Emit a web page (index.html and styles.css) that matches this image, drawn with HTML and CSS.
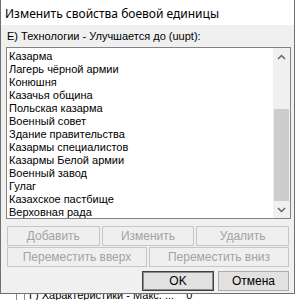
FILE: index.html
```html
<!DOCTYPE html>
<html>
<head>
	<meta charset="utf-8">
	<title>Изменить свойства боевой единицы</title>
	<link rel="stylesheet" href="styles.css">
</head>
<body>
	<!-- диалог поверх главного окна -->
	<div class="dialog">
		<div class="titlebar">Изменить свойства боевой единицы</div>
		<div class="content">
			<div class="caption">E) Технологии - Улучшается до (uupt):</div>
			<div class="listbox">
				<ul class="items">
					<li>Казарма</li>
					<li>Лагерь чёрной армии</li>
					<li>Конюшня</li>
					<li>Казачья община</li>
					<li>Польская казарма</li>
					<li>Военный совет</li>
					<li>Здание правительства</li>
					<li>Казармы специалистов</li>
					<li>Казармы Белой армии</li>
					<li>Военный завод</li>
					<li>Гулаг</li>
					<li>Казахское пастбище</li>
					<li>Верховная рада</li>
				</ul>
				<div class="scrollbar">
					<div class="arrow">
						<svg width="9" height="6" viewBox="0 0 9 6"><polyline points="1,5 4.5,1.5 8,5" fill="none" stroke="#606060" stroke-width="1.4"/></svg>
					</div>
					<div class="track"><div class="thumb"></div></div>
					<div class="arrow">
						<svg width="9" height="6" viewBox="0 0 9 6"><polyline points="1,1 4.5,4.5 8,1" fill="none" stroke="#606060" stroke-width="1.4"/></svg>
					</div>
				</div>
			</div>
			<div class="btnrow three">
				<button class="btn" disabled>Добавить</button>
				<button class="btn" disabled>Изменить</button>
				<button class="btn" disabled>Удалить</button>
			</div>
			<div class="btnrow two">
				<button class="btn" disabled>Переместить вверх</button>
				<button class="btn" disabled>Переместить вниз</button>
			</div>
			<div class="actions">
				<button class="btn main default">OK</button>
				<button class="btn main">Отмена</button>
			</div>
		</div>
	</div>
	<!-- то, что видно под диалогом -->
	<div class="behind">
		<div class="behind-line"><span class="check"></span>Г) Характеристики - Макс. ...<span class="val">0</span></div>
	</div>
</body>
</html>
```

FILE: styles.css
```css
/*сброс*/
body,div,ul,li{margin: 0;padding: 0;}
ul{list-style-type: none;}
body{
	background: #fff;
	font: 11px/13px "Liberation Sans", Arial, sans-serif;
	color: #000;
}
.dialog{
	width: 295px;
	height: 294px;
	box-sizing: border-box;
	border: 1px solid #707070;
	border-top: 0;
	background: #f0f0f0;
	display: flex;
	flex-direction: column;
}
.titlebar{
	height: 25px;
	line-height: 27px;
	padding-left: 4px;
	background: #fff;
	font: 12px/27px "Noto Sans", "Open Sans", sans-serif;
	white-space: nowrap;
}
.content{
	padding: 5px 5px 0 5px;
}
.caption{
	padding-left: 1px;
	height: 13px;
	margin-bottom: 4px;
}
.listbox{
	width: 285px;
	height: 172px;
	box-sizing: border-box;
	border: 1px solid #828282;
	background: #fff;
	display: flex;
}
.items{
	flex: 1;
	padding: 2px 0 0 2px;
	overflow: hidden;
}
.items li{
	height: 13px;
	white-space: nowrap;
}
.scrollbar{
	width: 17px;
	background: #f0f0f0;
	display: flex;
	flex-direction: column;
}
.arrow{
	height: 17px;
	display: flex;
	align-items: center;
	justify-content: center;
}
.track{
	flex: 1;
	display: flex;
	flex-direction: column;
}
.thumb{
	margin: 44px 1px 0 1px;
	flex: 1;
	background: #cdcdcd;
}
.btnrow{
	display: grid;
	gap: 2px;
	width: 282px;
	margin-left: 1px;
}
.three{grid-template-columns: repeat(3, 1fr);margin-top: 7px;}
.two{grid-template-columns: repeat(2, 1fr);margin-top: 1px;}
.btn{
	height: 20px;
	margin: 0;
	padding: 0;
	box-sizing: border-box;
	border: 1px solid #c6c6c6;
	background: #efefef;
	color: #a3a3a3;
	font: 12px "Liberation Sans", Arial, sans-serif;
}
.actions{
	display: flex;
	justify-content: flex-end;
	gap: 4px;
	width: 283px;
	margin-top: 4px;
}
.btn.main{
	width: 71px;
	background: #e1e1e1;
	border-color: #adadad;
	color: #000;
}
.btn.default{
	width: 72px;
	border-color: #3f3f3f;
	box-shadow: inset 0 0 0 1px #8c8c8c;
}
.behind{
	height: 6px;
	overflow: hidden;
	width: 295px;
}
.behind-line{
	margin-top: -5px;
	display: flex;
	align-items: center;
	white-space: nowrap;
}
.check{
	width: 7px;
	height: 13px;
	border-left: 1px solid #8a8a8a;
	border-right: 1px solid #8a8a8a;
	margin: 0 4px 0 16px;
}
.val{margin-left: 12px;}
```
